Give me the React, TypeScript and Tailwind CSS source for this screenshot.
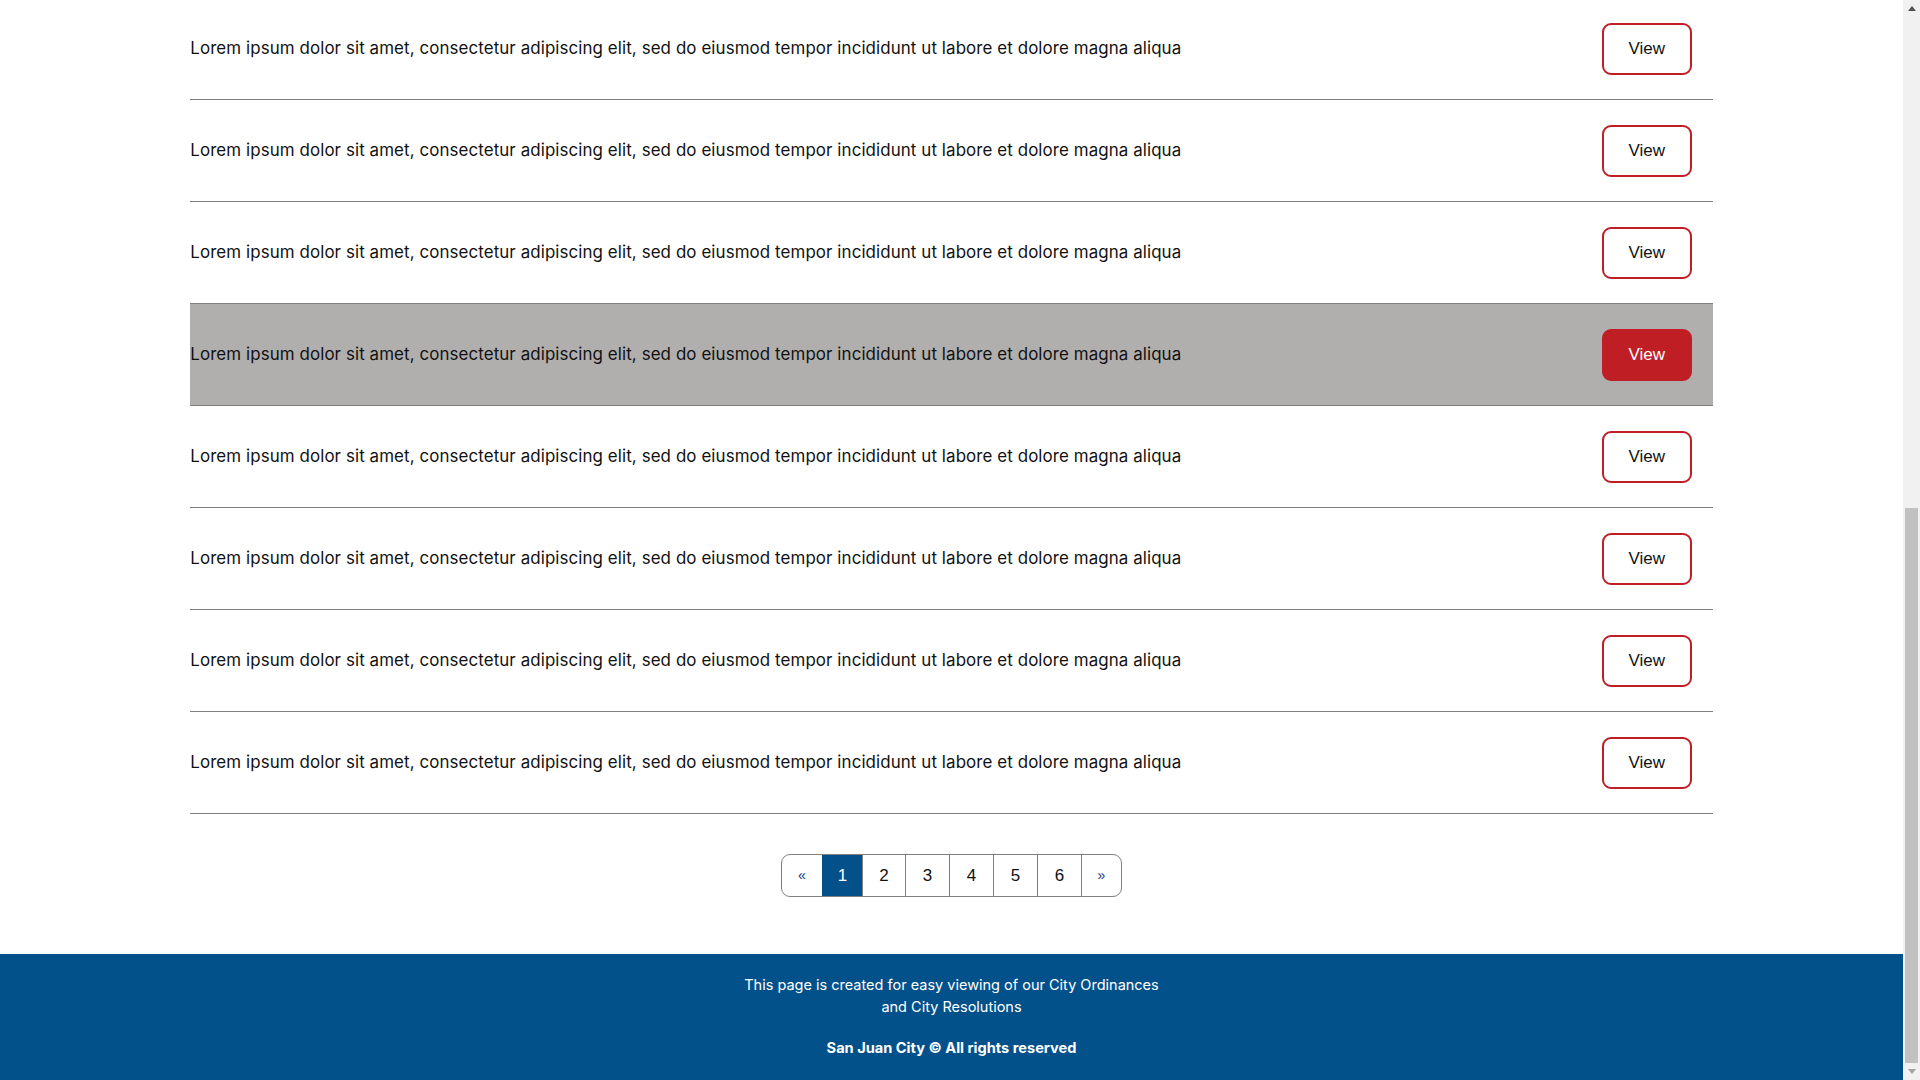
import React from 'react';

const LOREM =
  'Lorem ipsum dolor sit amet, consectetur adipiscing elit, sed do eiusmod tempor incididunt ut labore et dolore magna aliqua';

const ROWS = [0, 1, 2, 3, 4, 5, 6, 7];
const PAGES = ['1', '2', '3', '4', '5', '6'];

const App: React.FC = () => {
  return (
    <div className="flex h-screen w-full overflow-hidden bg-white">
      <div className="flex-1 flex flex-col min-w-0 font-['Inter',sans-serif]">
        {/* Ordinance list */}
        <div className="w-[80%] mx-auto -mt-[2px]">
          {ROWS.map((i) => (
            <div
              key={i}
              className={`flex items-center justify-between h-[102px] border-b border-[#7f7f7f] ${
                i === 3 ? 'bg-[#b0afae]' : ''
              }`}
            >
              <p className="text-[16.9px] text-[#111] tracking-[0.1px]">{LOREM}</p>
              <button
                className={`mr-[21px] w-[90px] h-[52px] rounded-[9px] border-2 border-[#be1e24] font-['Liberation_Sans',sans-serif] text-[17px] ${
                  i === 3 ? 'bg-[#be1e24] text-white' : 'bg-white text-[#111]'
                }`}
              >
                View
              </button>
            </div>
          ))}
        </div>

        {/* Pagination */}
        <div className="flex justify-center mt-[40px] mb-[57px]">
          <div className="flex h-[43px] border border-[#7f7f7f] rounded-[9px] overflow-hidden font-['Liberation_Sans',sans-serif] text-[17px] text-[#111]">
            <span className="w-[40px] flex items-center justify-center text-[#0b3a80] text-[14px]">«</span>
            {PAGES.map((p, idx) => (
              <span
                key={p}
                className={`flex items-center justify-center border-l ${
                  idx === 0
                    ? 'w-[40px] bg-[#03508a] text-white border-[#03508a]'
                    : idx === 1
                      ? 'w-[43px] border-[#7f7f7f]'
                      : 'w-[44px] border-[#7f7f7f]'
                }`}
              >
                {p}
              </span>
            ))}
            <span className="w-[40px] flex items-center justify-center border-l border-[#7f7f7f] text-[#0b3a80] text-[14px]">»</span>
          </div>
        </div>

        {/* Footer */}
        <footer className="flex-1 bg-[#03518a] text-white text-center pt-[20px]">
          <p className="text-[14.5px] leading-[22px] max-w-[440px] mx-auto">
            This page is created for easy viewing of our City Ordinances and City Resolutions
          </p>
          <p className="mt-[20px] text-[14.6px] font-bold">San Juan City © All rights reserved</p>
        </footer>
      </div>

      {/* Scrollbar */}
      <div className="w-[17px] bg-[#f1f1f1] flex flex-col items-center">
        <div className="h-[17px] flex items-center justify-center">
          <svg width="8" height="5" viewBox="0 0 8 5">
            <path d="M0 5 L4 0 L8 5 Z" fill="#505050" />
          </svg>
        </div>
        <div className="flex-1 w-full px-[2px] flex flex-col justify-end">
          <div className="h-[555px] bg-[#c1c1c1]" />
        </div>
        <div className="h-[17px] flex items-center justify-center">
          <svg width="8" height="5" viewBox="0 0 8 5">
            <path d="M0 0 L4 5 L8 0 Z" fill="#a3a3a3" />
          </svg>
        </div>
      </div>
    </div>
  );
};

export default App;
